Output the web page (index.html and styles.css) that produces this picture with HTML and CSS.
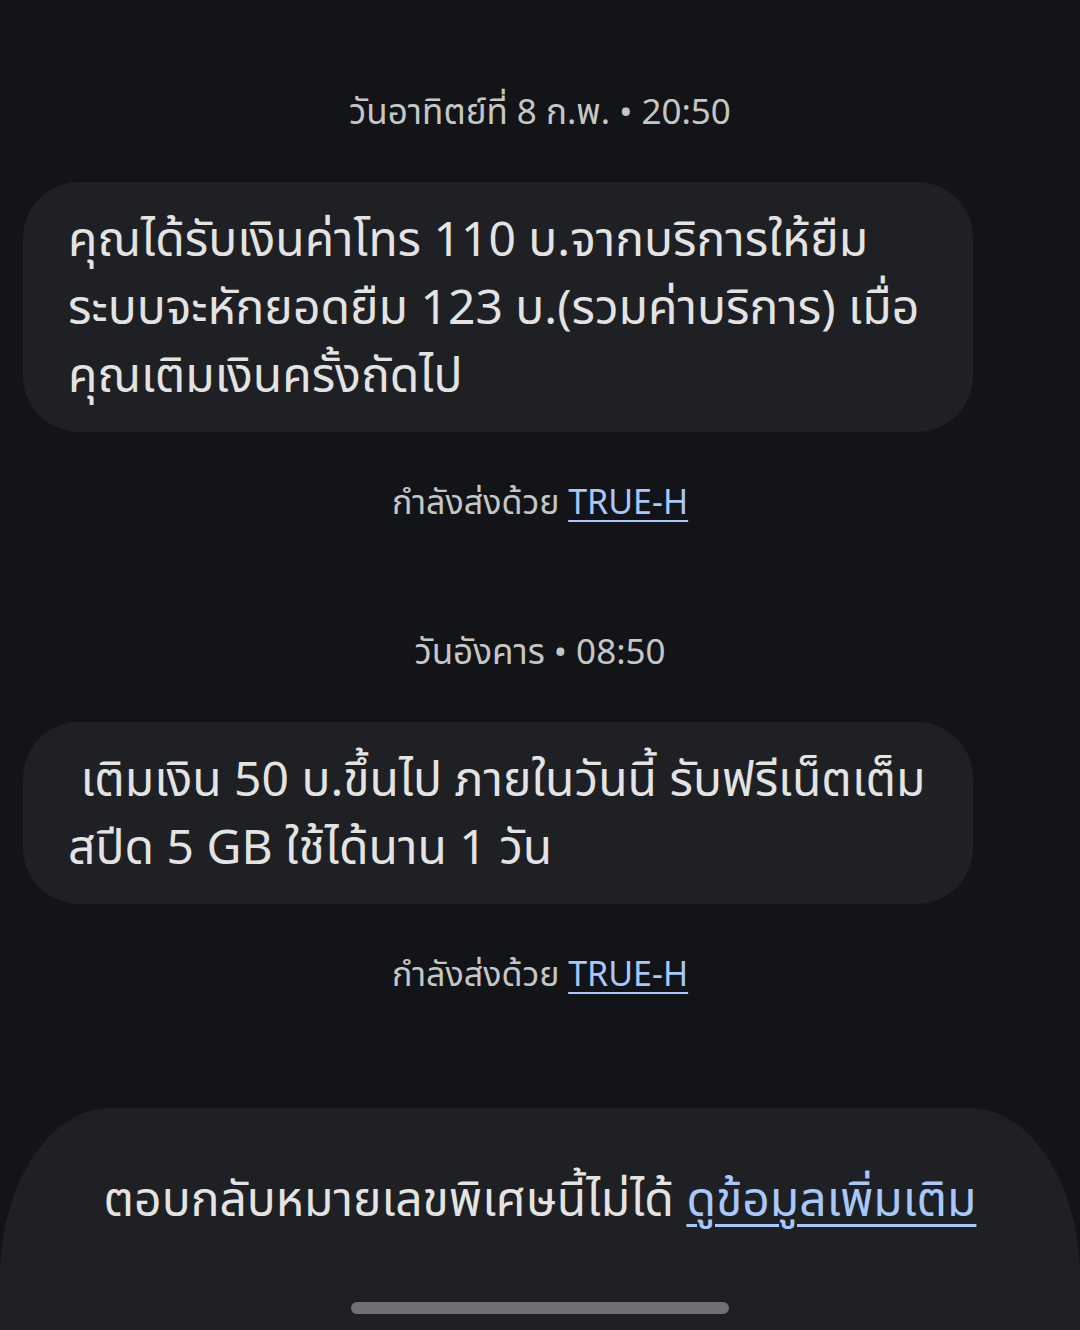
FILE: index.html
```html
<!DOCTYPE html>
<html lang="th">
<head>
<meta charset="utf-8">
<link rel="stylesheet" href="styles.css">
</head>
<body>
<div class="screen">
  <main class="thread">
    <div class="stamp">วันอาทิตย์ที่ 8 ก.พ. • 20:50</div>
    <div class="bubble">คุณได้รับเงินค่าโทร 110 บ.จากบริการให้ยืม<br>ระบบจะหักยอดยืม 123 บ.(รวมค่าบริการ) เมื่อ<br>คุณเติมเงินครั้งถัดไป</div>
    <div class="via">กำลังส่งด้วย <span class="link">TRUE-H</span></div>
    <div class="stamp second">วันอังคาร • 08:50</div>
    <div class="bubble">&nbsp;เติมเงิน 50 บ.ขึ้นไป ภายในวันนี้ รับฟรีเน็ตเต็ม<br>สปีด 5 GB ใช้ได้นาน 1 วัน</div>
    <div class="via">กำลังส่งด้วย <span class="link">TRUE-H</span></div>
  </main>
  <footer class="panel">
    <p class="notice">ตอบกลับหมายเลขพิเศษนี้ไม่ได้ <span class="link">ดูข้อมูลเพิ่มเติม</span></p>
    <div class="handle"></div>
  </footer>
</div>
</body>
</html>
```
FILE: styles.css
```css
html, body {
  margin: 0;
  padding: 0;
  background: #131418;
}
body {
  width: 1080px;
  height: 1330px;
  overflow: hidden;
  font-family: "Noto Sans Thai", "Noto Sans", "DejaVu Sans", sans-serif;
  color: #e3e3e3;
}
.screen {
  height: 1330px;
  display: flex;
  flex-direction: column;
}
.thread {
  flex: 1;
  display: flex;
  flex-direction: column;
  padding-top: 92px;
}
.stamp {
  text-align: center;
  font-size: 35px;
  line-height: 44px;
  color: #c4c7c5;
}
.stamp.second {
  margin-top: 106px;
}
.bubble {
  margin: 46px 0 0 23px;
  width: 950px;
  box-sizing: border-box;
  padding: 26px 20px 20px 45px;
  background: #1f2024;
  border-radius: 56px;
  font-size: 48px;
  line-height: 68px;
  white-space: nowrap;
  color: #e3e3e3;
}
.via {
  margin-top: 50px;
  text-align: center;
  font-size: 34px;
  line-height: 44px;
  color: #c4c7c5;
}
.link {
  color: #a8c7fa;
  text-decoration: underline;
  text-underline-offset: 6px;
  text-decoration-thickness: 2px;
}
.panel {
  height: 222px;
  background: #1f2024;
  border-radius: 110px 110px 0 0 / 170px 170px 0 0;
  display: flex;
  flex-direction: column;
  align-items: center;
}
.notice {
  margin: 66px 0 0;
  font-size: 48px;
  line-height: 56px;
  white-space: nowrap;
  color: #e3e3e3;
}
.notice .link {
  text-decoration-thickness: 3px;
  text-underline-offset: 8px;
}
.handle {
  margin-top: 72px;
  width: 378px;
  height: 12px;
  border-radius: 6px;
  background: #6f7073;
}
```
